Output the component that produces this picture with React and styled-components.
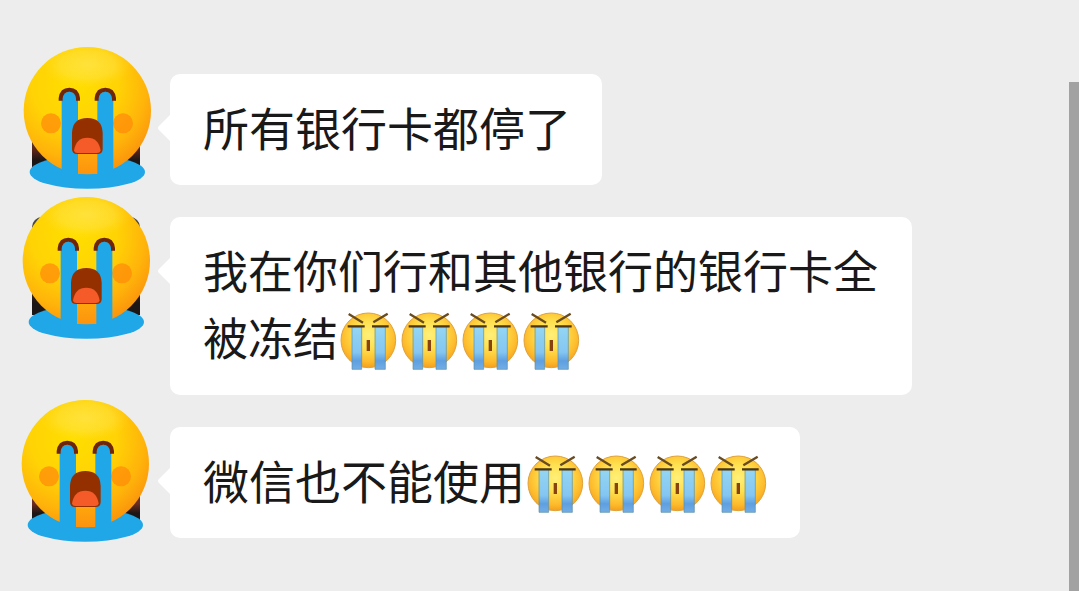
import React from 'react';
import styled, {createGlobalStyle} from 'styled-components';

const GlobalStyle = createGlobalStyle`
    body {
        margin: 0;
        background: #ededed;
    }
`;

const Chat = styled.main`
    display: flex;
    flex-direction: column;
    gap: 32px;
    min-height: 100vh;
    box-sizing: border-box;
    padding: 74px 32px 52px;
    font-family: "Noto Sans CJK SC", "Noto Sans", sans-serif;
    color: #191919;
`;

const Row = styled.article`
    display: flex;
    align-items: flex-start;
    gap: 30px;
`;

const Avatar = styled.div`
    position: relative;
    flex: none;
    width: 108px;
    height: 98px;
    border-radius: 10px 10px 0 0;
    background: linear-gradient(#4a4745 60%, ${props => props.$glow} 78%, #1d1616 88%);
`;

// the sticker is bigger than the avatar and hangs over all of its edges
const Sticker = styled.svg`
    position: absolute;
    top: ${props => props.$top}px;
    left: ${props => props.$left}px;
    width: 129px;
    height: 143px;
`;

const Bubble = styled.div`
    position: relative;
    box-sizing: border-box;
    max-width: 742px;
    padding: 19px 31px 25px 33px;
    border-radius: 10px;
    background: #fff;
`;

const Tail = styled.svg`
    position: absolute;
    top: 40px;
    left: -13px;
    width: 14px;
    height: 28px;
    fill: #fff;
`;

const Text = styled.p`
    margin: 0;
    font-size: ${props => props.$long ? '45px' : '46px'};
    line-height: 67px;
`;

const Emoji = styled.svg`
    width: 61px;
    height: 61px;
    margin: -12px 0 -8px;
    vertical-align: middle;
`;

const Scrollbar = styled.div`
    position: fixed;
    top: 82px;
    right: 0;
    bottom: 0;
    width: 10px;
    background: #a2a2a2;
`;

const CryingSticker = ({top, left}) => (
    <Sticker $top={top} $left={left} viewBox="38 33 387 429" aria-hidden="true">
        <ellipse cx="231" cy="411" rx="173" ry="50" fill="#20a7e8" />
        <circle cx="231" cy="227" r="191" fill="url(#face)" />
        <circle cx="231" cy="227" r="191" fill="url(#shine)" />
        <circle cx="122" cy="265" r="30" fill="#ff8c0a" opacity=".75" />
        <circle cx="338" cy="265" r="30" fill="#ff8c0a" opacity=".75" />
        <rect x="201" y="340" width="61" height="77" fill="url(#chin)" />
        <path d="M154 425V193Q156 170 178 170Q201 170 203 193V425Z" fill="#20a7e8" />
        <path d="M261 425V193Q263 170 285 170Q307 170 309 193V425Z" fill="#20a7e8" />
        <path d="M151 197V190Q154 164 177 164Q200 164 203 190V197" fill="none" stroke="#6e2509" strokeWidth="12" />
        <path d="M259 197V190Q262 164 285 164Q308 164 311 190V197" fill="none" stroke="#6e2509" strokeWidth="12" />
        <path d="M185 293Q187 249 231 249Q275 249 277 293V342Q277 357 262 357H200Q185 357 185 342Z" fill="#943000" />
        <path d="M191 347Q197 308 231 308Q265 308 271 347Q269 354 260 354H201Q193 354 191 347Z" fill="#f45b28" />
    </Sticker>
);

const SobEmoji = () => (
    <Emoji viewBox="16 33 183 183" role="img" aria-label="大哭">
        <circle cx="107" cy="121" r="82" fill="url(#sob)" stroke="#dfa23c" strokeWidth="3" />
        <path d="M58 80H87V208H58Z" fill="url(#tear)" stroke="#5e90a0" strokeWidth="2" />
        <path d="M127 80H158V208H127Z" fill="url(#tear)" stroke="#5e90a0" strokeWidth="2" />
        <path d="M48 42L91 68M165 41L122 67" stroke="#694b22" strokeWidth="7" />
        <path d="M45 79H96M118 79H168" stroke="#4b3514" strokeWidth="7" />
        <rect x="102" y="120" width="10" height="33" fill="#87420f" />
    </Emoji>
);

const Hidden = styled.svg`
    position: absolute;
    width: 0;
    height: 0;
`;

const Gradients = () => (
    <Hidden aria-hidden="true">
        <defs>
            <radialGradient id="face" cx=".4" cy=".3" r=".75">
                <stop offset="0" stopColor="#ffde00" />
                <stop offset=".45" stopColor="#ffd305" />
                <stop offset=".75" stopColor="#ffb40a" />
                <stop offset="1" stopColor="#fa8f0c" />
            </radialGradient>
            <radialGradient id="shine" cx=".5" cy=".2" r=".36" gradientTransform="translate(0 .04) scale(1 .5)">
                <stop offset="0" stopColor="#ffe860" stopOpacity=".6" />
                <stop offset=".6" stopColor="#ffe860" stopOpacity=".35" />
                <stop offset="1" stopColor="#ffe030" stopOpacity="0" />
            </radialGradient>
            <linearGradient id="chin" x1="0" y1="0" x2="0" y2="1">
                <stop offset="0" stopColor="#ffab0c" />
                <stop offset="1" stopColor="#fd930e" />
            </linearGradient>
            <radialGradient id="sob" cx=".5" cy=".4" r=".62">
                <stop offset="0" stopColor="#fff07a" />
                <stop offset=".4" stopColor="#ffe04e" />
                <stop offset=".8" stopColor="#fdb92a" />
                <stop offset="1" stopColor="#f39a1c" />
            </radialGradient>
            <linearGradient id="tear" x1="0" y1="0" x2="0" y2="1">
                <stop offset="0" stopColor="#93d6f3" />
                <stop offset=".6" stopColor="#84c6f2" />
                <stop offset=".8" stopColor="#5f9fe0" />
                <stop offset="1" stopColor="#72aee6" />
            </linearGradient>
        </defs>
    </Hidden>
);

const messages = [
    {text: '所有银行卡都停了', sobs: 0, top: -28, left: -9, glow: '#5a2418'},
    {text: '我在你们行和其他银行的银行卡全被冻结', sobs: 4, long: true, top: -21, left: -10, glow: '#35241f'},
    {text: '微信也不能使用', sobs: 4, top: -28, left: -11, glow: '#6e2c20'},
];

const Message = ({text, sobs, long, top, left, glow}) => (
    <Row>
        <Avatar $glow={glow}>
            <CryingSticker top={top} left={left} />
        </Avatar>
        <Bubble>
            <Tail viewBox="0 0 14 28" aria-hidden="true">
                <path d="M14 0V28L2 16Q0 14 2 12Z" />
            </Tail>
            <Text $long={long}>
                {text}
                {Array.from({length: sobs}, (_, i) => <SobEmoji key={i} />)}
            </Text>
        </Bubble>
    </Row>
);

const App = () => (
    <>
        <GlobalStyle />
        <Gradients />
        <Chat>
            {messages.map(message => <Message key={message.text} {...message} />)}
        </Chat>
        <Scrollbar />
    </>
);

export default App;
